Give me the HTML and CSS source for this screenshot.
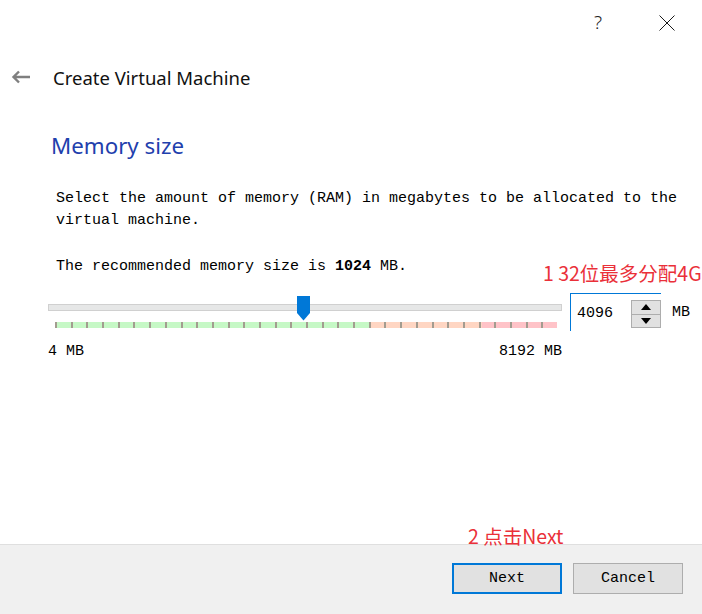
FILE: index.html
```html
<!DOCTYPE html>
<html>
<head>
<meta charset="utf-8">
<link rel="stylesheet" href="styles.css">
</head>
<body>
<div class="dialog">
  <div class="titlebar">
    <span class="help">?</span>
    <svg class="close" width="16" height="16" viewBox="0 0 16 16"><path d="M0.5 0.5 L15.5 15.5 M15.5 0.5 L0.5 15.5" stroke="#1a1a1a" stroke-width="1" fill="none"/></svg>
  </div>
  <div class="nav">
    <svg class="back" width="20" height="14" viewBox="0 0 20 14"><path d="M19 7 H3 M8 1.5 L2.5 7 L8 12.5" stroke="#7f7f7f" stroke-width="2.4" fill="none"/></svg>
    <span class="nav-title">Create Virtual Machine</span>
  </div>
  <div class="content">
    <h1 class="heading">Memory size</h1>
    <p class="desc">Select the amount of memory (RAM) in megabytes to be allocated to the virtual machine.</p>
    <p class="desc rec">The recommended memory size is <b>1024</b> MB.</p>
    <div class="mem-row">
      <span class="note note1">1 32位最多分配4G</span>
      <div class="slider">
        <div class="groove">
          <svg class="thumb" width="13" height="25" viewBox="0 0 13 25"><polygon points="0,0 13,0 13,17 6.5,24.5 0,17" fill="#0078d7"/></svg>
        </div>
        <div class="ticks">
          <span></span><span></span><span></span><span></span><span></span><span></span><span></span><span></span>
          <span></span><span></span><span></span><span></span><span></span><span></span><span></span><span></span>
          <span></span><span></span><span></span><span></span><span></span><span></span><span></span><span></span>
          <span></span><span></span><span></span><span></span><span></span><span></span><span></span><span></span>
        </div>
        <div class="range-labels"><span>4 MB</span><span>8192 MB</span></div>
      </div>
      <div class="spinbox">
        <span class="spin-value">4096</span>
        <div class="spin-buttons">
          <div class="spin-btn"><svg width="10" height="6" viewBox="0 0 10 6"><polygon points="5,0 10,6 0,6" fill="#000"/></svg></div>
          <div class="spin-btn"><svg width="10" height="6" viewBox="0 0 10 6"><polygon points="0,0 10,0 5,6" fill="#000"/></svg></div>
        </div>
      </div>
      <span class="unit">MB</span>
    </div>
  </div>
  <div class="footer">
    <span class="note note2">2 点击Next</span>
    <button class="btn btn-primary">Next</button>
    <button class="btn">Cancel</button>
  </div>
</div>
</body>
</html>
```
FILE: styles.css
```css
html, body {
  margin: 0;
  padding: 0;
  background: #ffffff;
}
.dialog {
  width: 702px;
  height: 614px;
  display: flex;
  flex-direction: column;
  font-family: "Liberation Mono", monospace;
  font-size: 15px;
  color: #000;
}
.titlebar {
  height: 45px;
  display: flex;
  justify-content: flex-end;
  align-items: center;
  padding-right: 27px;
  gap: 57px;
  box-sizing: border-box;
}
.help {
  font-family: "Noto Sans", sans-serif;
  font-size: 19px;
  font-weight: 300;
  color: #222;
  line-height: 1;
}
.close {
  display: block;
}
.nav {
  height: 64px;
  display: flex;
  align-items: center;
  padding-left: 11px;
}
.back {
  display: block;
  margin-right: 22px;
}
.nav-title {
  font-family: "Noto Sans", sans-serif;
  font-size: 18.5px;
  color: #111;
}
.content {
  flex: 1;
  padding-left: 48px;
}
.heading {
  margin: 22px 0 0 3px;
  font-family: "Noto Sans", sans-serif;
  font-weight: 400;
  font-size: 22.3px;
  line-height: 30px;
  color: #1f40ad;
}
.desc {
  margin: 27px 0 0 8px;
  width: 630px;
  line-height: 22px;
  white-space: normal;
}
.desc.rec {
  margin-top: 24px;
}
.mem-row {
  position: relative;
  display: flex;
  align-items: flex-start;
  margin-top: 15px;
}
.note {
  position: absolute;
  font-family: "Noto Sans CJK SC", "Noto Sans", sans-serif;
  font-size: 19.5px;
  color: #ea3039;
  line-height: 22px;
  white-space: nowrap;
}
.note1 {
  left: 495px;
  top: -31px;
}
.slider {
  width: 514px;
}
.groove {
  position: relative;
  margin-top: 11px;
  height: 7px;
  box-sizing: border-box;
  background: #e6e7e7;
  border: 1px solid #d0d0d0;
}
.thumb {
  position: absolute;
  left: 248px;
  top: -9px;
}
.ticks {
  margin: 11px 0 0 7px;
  width: 502px;
  height: 6px;
  display: flex;
  background: linear-gradient(to right, #c6f8c6 0, #c6f8c6 314px, #ffd6c3 314px, #ffd6c3 427px, #ffc3c8 427px, #ffc3c8 502px);
}
.ticks span {
  flex: 1;
  border-left: 2px solid #a39c90;
}
.range-labels {
  margin-top: 15px;
  display: flex;
  justify-content: space-between;
  line-height: 18px;
}
.spinbox {
  margin-left: 8px;
  width: 91px;
  height: 38px;
  box-sizing: border-box;
  border-top: 1px solid #0078d7;
  border-left: 1px solid #0078d7;
  display: flex;
  align-items: center;
  justify-content: space-between;
  padding-left: 6px;
}
.spin-value {
  margin-top: 2px;
}
.spin-buttons {
  width: 30px;
  height: 28px;
  display: flex;
  flex-direction: column;
  margin-top: 3px;
}
.spin-btn {
  flex: 1;
  background: #e1e1e1;
  border: 1px solid #adadad;
  display: flex;
  align-items: center;
  justify-content: center;
}
.spin-btn + .spin-btn {
  border-top: none;
}
.unit {
  margin-left: 11px;
  margin-top: 11px;
}
.footer {
  position: relative;
  height: 70px;
  box-sizing: border-box;
  background: #f0f0f0;
  border-top: 1px solid #dfdfdf;
  display: flex;
  justify-content: flex-end;
  align-items: flex-start;
  gap: 11px;
  padding: 18px 19px 0 0;
}
.note2 {
  left: 468px;
  top: -20px;
}
.btn {
  width: 110px;
  height: 31px;
  box-sizing: border-box;
  background: #e1e1e1;
  border: 1px solid #adadad;
  font-family: "Liberation Mono", monospace;
  font-size: 15px;
  color: #000;
  padding: 0;
  margin: 0;
}
.btn-primary {
  border: 2px solid #0078d7;
}
```
